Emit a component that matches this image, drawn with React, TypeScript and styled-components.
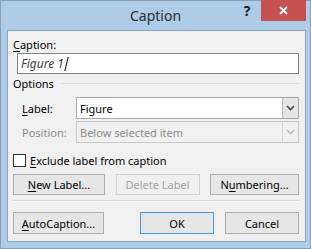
import styled, { createGlobalStyle } from "styled-components";

const GlobalStyle = createGlobalStyle`
  html, body {
    margin: 0;
    padding: 0;
    background: #ffffff;
  }
  body {
    font-family: "Noto Sans", "Liberation Sans", sans-serif;
    font-size: 11px;
    color: #000000;
  }
`;

const Window = styled.div`
  width: 311px;
  height: 249px;
  box-sizing: border-box;
  border: 1px solid #8a9fb6;
  background: #aecbe8;
  display: flex;
  flex-direction: column;
`;

const TitleBar = styled.div`
  height: 29px;
  display: grid;
  grid-template-columns: 1fr auto 1fr;
  align-items: start;
`;

const Title = styled.div`
  grid-column: 2;
  font-size: 14px;
  line-height: 30px;
  color: #2e2e2e;
`;

const Controls = styled.div`
  grid-column: 3;
  justify-self: end;
  display: flex;
  margin-top: -1px;
  margin-right: 4px;
`;

const HelpButton = styled.div`
  width: 26px;
  height: 21px;
  display: flex;
  align-items: center;
  justify-content: center;
  font-weight: bold;
  font-size: 14px;
  color: #1e1e1e;
  padding-right: 2px;
  box-sizing: border-box;
`;

const CloseButton = styled.div`
  width: 45px;
  height: 21px;
  background: #c75050;
  display: flex;
  align-items: center;
  justify-content: center;
`;

const Client = styled.div`
  flex: 1;
  margin: 0 4px 6px 6px;
  border: 1px solid #8ea4bc;
  background: #f0f0f0;
  padding: 6px 6px 0 5px;
  display: flex;
  flex-direction: column;
`;

const FieldLabel = styled.div`
  line-height: 15px;
  height: 15px;
  margin-bottom: 1px;
`;

const Mn = styled.span`
  text-decoration: underline;
  text-underline-offset: 2px;
`;

const TextBox = styled.div`
  margin-left: 4px;
  height: 21px;
  box-sizing: border-box;
  border: 1px solid #7f8389;
  background: #ffffff;
  display: flex;
  align-items: center;
  padding-left: 3px;
  font-style: italic;
  font-size: 12px;
  color: #3c3c3c;
`;

const Caret = styled.span`
  display: inline-block;
  width: 1px;
  height: 14px;
  background: #000000;
  margin-left: 2px;
  transform: skewX(-14deg);
`;

const GroupHeader = styled.div`
  margin-top: 2px;
  height: 15px;
  line-height: 15px;
  display: flex;
  align-items: center;
  gap: 7px;
  &::after {
    content: "";
    flex: 1;
    height: 1px;
    background: #dcdcdc;
  }
`;

const OptionRow = styled.div<{ $gap: number }>`
  margin-top: ${(p) => p.$gap}px;
  margin-left: 9px;
  display: flex;
  align-items: center;
`;

const RowLabel = styled.div<{ $disabled?: boolean }>`
  width: 54px;
  color: ${(p) => (p.$disabled ? "#8d8d8d" : "#000000")};
`;

const Select = styled.div<{ $disabled?: boolean }>`
  flex: 1;
  height: 22px;
  box-sizing: border-box;
  border: 1px solid ${(p) => (p.$disabled ? "#c8c8c8" : "#a8a8a8")};
  background: ${(p) => (p.$disabled ? "#f0f0f0" : "#ffffff")};
  color: ${(p) => (p.$disabled ? "#8d8d8d" : "#000000")};
  display: flex;
  align-items: stretch;
`;

const SelectText = styled.div`
  flex: 1;
  display: flex;
  align-items: center;
  padding-left: 3px;
`;

const DropButton = styled.div<{ $disabled?: boolean }>`
  width: 15px;
  border-left: 1px solid ${(p) => (p.$disabled ? "#d6d6d6" : "#b5b5b5")};
  background: ${(p) => (p.$disabled ? "#f0f0f0" : "#e5e5e5")};
  display: flex;
  align-items: center;
  justify-content: center;
`;

const CheckRow = styled.div`
  margin-top: 10px;
  display: flex;
  align-items: center;
  gap: 4px;
`;

const CheckBox = styled.div`
  width: 13px;
  height: 13px;
  box-sizing: border-box;
  border: 1px solid #333333;
  background: #ffffff;
`;

const ButtonRow = styled.div<{ $gap: number }>`
  margin-top: ${(p) => p.$gap}px;
  display: flex;
  justify-content: space-between;
`;

const Button = styled.div<{ $w: number; $h: number; $disabled?: boolean; $default?: boolean }>`
  width: ${(p) => p.$w}px;
  height: ${(p) => p.$h}px;
  box-sizing: border-box;
  border: 1px solid
    ${(p) => (p.$default ? "#4a9ad8" : p.$disabled ? "#d2d2d2" : "#adadad")};
  background: ${(p) => (p.$disabled ? "#f0f0f0" : "#e6e6e6")};
  color: ${(p) => (p.$disabled ? "#a3a3a3" : "#000000")};
  display: flex;
  align-items: center;
  justify-content: center;
`;

const Spacer = styled.div`
  flex: 1;
`;

const Separator = styled.div`
  margin-top: 5px;
  height: 1px;
  background: #dadada;
  border-bottom: 1px solid #fafafa;
`;

const BottomRow = styled.div`
  margin-top: 10px;
  display: flex;
  gap: 11px;
`;

function Chevron({ color }: { color: string }) {
  return (
    <svg width="9" height="6" viewBox="0 0 9 6">
      <path d="M1 1 L4.5 4.5 L8 1" fill="none" stroke={color} strokeWidth="1.6" />
    </svg>
  );
}

export default function App() {
  return (
    <>
      <GlobalStyle />
      <Window>
        <TitleBar>
          <Title>Caption</Title>
          <Controls>
            <HelpButton>?</HelpButton>
            <CloseButton>
              <svg width="9" height="9" viewBox="0 0 9 9">
                <path d="M1 1 L8 8 M8 1 L1 8" stroke="#ffffff" strokeWidth="1.8" />
              </svg>
            </CloseButton>
          </Controls>
        </TitleBar>
        <Client>
          <FieldLabel>
            <Mn>C</Mn>aption:
          </FieldLabel>
          <TextBox>
            Figure 1<Caret />
          </TextBox>
          <GroupHeader>Options</GroupHeader>
          <OptionRow $gap={6}>
            <RowLabel>
              <Mn>L</Mn>abel:
            </RowLabel>
            <Select>
              <SelectText>Figure</SelectText>
              <DropButton>
                <Chevron color="#444444" />
              </DropButton>
            </Select>
          </OptionRow>
          <OptionRow $gap={2}>
            <RowLabel $disabled>Position:</RowLabel>
            <Select $disabled>
              <SelectText>Below selected item</SelectText>
              <DropButton $disabled>
                <Chevron color="#bdbdbd" />
              </DropButton>
            </Select>
          </OptionRow>
          <CheckRow>
            <CheckBox />
            <span>
              <Mn>E</Mn>xclude label from caption
            </span>
          </CheckRow>
          <ButtonRow $gap={6}>
            <Button $w={92} $h={21}>
              <span>
                <Mn>N</Mn>ew Label...
              </span>
            </Button>
            <Button $w={84} $h={21} $disabled>
              Delete Label
            </Button>
            <Button $w={89} $h={21}>
              <span>
                N<Mn>u</Mn>mbering...
              </span>
            </Button>
          </ButtonRow>
          <Separator />
          <BottomRow>
            <Button $w={91} $h={22}>
              <span>
                <Mn>A</Mn>utoCaption...
              </span>
            </Button>
            <Spacer />
            <Button $w={74} $h={22} $default>
              OK
            </Button>
            <Button $w={74} $h={22}>
              Cancel
            </Button>
          </BottomRow>
        </Client>
      </Window>
    </>
  );
}
